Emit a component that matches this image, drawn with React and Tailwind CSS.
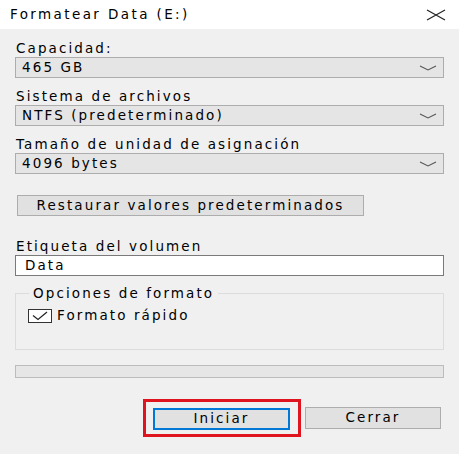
import { useState } from 'react';

const font = { fontFamily: '"DejaVu Sans", Verdana, sans-serif' };

function Chevron() {
    return (
        <svg width="18" height="6" viewBox="0 0 18 6" fill="none" className="text-[#555]">
            <path d="M1 1 L9 5 L17 1" stroke="currentColor" strokeWidth="1.1" />
        </svg>
    );
}

function Combo({ value }) {
    return (
        <div className="h-[21px] flex items-center justify-between bg-[#e5e5e5] border border-[#adadad] pl-[6px] pr-[6px]">
            <span className="text-[13.5px] leading-none tracking-[2.1px] text-black">{value}</span>
            <Chevron />
        </div>
    );
}

function Label({ children, className = '' }) {
    return (
        <div className={`text-[13.5px] leading-[16px] tracking-[2.1px] text-black ${className}`}>{children}</div>
    );
}

export default function App() {
    const [quick, setQuick] = useState(true);

    return (
        <div style={font} className="w-[459px] h-[454px] bg-[#f0f0f0] flex flex-col overflow-hidden">
            {/* title bar */}
            <div className="h-[29px] bg-white flex items-center justify-between pl-[10px] pr-[13px]">
                <span className="text-[13.5px] tracking-[2.4px] text-black">Formatear Data (E:)</span>
                <svg width="20" height="12" viewBox="0 0 20 12" className="text-[#222]">
                    <path d="M1 1 L19 11 M19 1 L1 11" stroke="currentColor" strokeWidth="1.2" fill="none" />
                </svg>
            </div>

            <div className="flex flex-col px-[15px] pt-[11px]">
                <Label className="pl-px">Capacidad:</Label>
                <div className="mt-px">
                    <Combo value="465 GB" />
                </div>

                <Label className="mt-[10px] pl-px">Sistema de archivos</Label>
                <div className="mt-px">
                    <Combo value="NTFS (predeterminado)" />
                </div>

                <Label className="mt-[10px] pl-px">Tamaño de unidad de asignación</Label>
                <div className="mt-px">
                    <Combo value="4096 bytes" />
                </div>

                <div className="mt-[19px] pl-[2px]">
                    <button className="h-[21px] w-[347px] bg-[#e1e1e1] border border-[#adadad] text-[13.5px] leading-none tracking-[2.1px] text-black">
                        Restaurar valores predeterminados
                    </button>
                </div>

                <Label className="mt-[21px] pl-px">Etiqueta del volumen</Label>
                <div className="mt-px h-[21px] bg-white border border-[#7a7a7a] flex items-center pl-[9px]">
                    <span className="text-[13.5px] leading-none tracking-[2.1px] text-black">Data</span>
                </div>

                {/* Opciones de formato */}
                <div className="relative mt-[17px] h-[57px] border border-[#dcdcdc]">
                    <span className="absolute -top-[9px] left-[13px] px-[4px] bg-[#f0f0f0] text-[13.5px] leading-[16px] tracking-[2.1px] text-black">
                        Opciones de formato
                    </span>
                    <label className="flex items-center gap-[5px] mt-[15px] ml-[12px]">
                        <button
                            onClick={() => setQuick(!quick)}
                            className="w-[24px] h-[14px] bg-white border border-[#333] flex items-center justify-center"
                        >
                            {quick && (
                                <svg width="18" height="10" viewBox="0 0 18 10" fill="none" className="text-[#222]">
                                    <path d="M2 4.5 L7 8.5 L16 1" stroke="currentColor" strokeWidth="1.2" />
                                </svg>
                            )}
                        </button>
                        <span className="text-[13.5px] leading-none tracking-[2.1px] text-black">Formato rápido</span>
                    </label>
                </div>

                {/* progress bar */}
                <div className="mt-[15px] h-[13px] bg-[#e6e6e6] border border-[#bcbcbc]" />

                {/* buttons */}
                <div className="mt-[21px] flex items-center justify-end">
                    <div className="border-[3px] border-[#e0141e] p-[4px] pl-[7px] pr-[8px]">
                        <button className="w-[137px] h-[22px] bg-[#e1e1e1] border-2 border-[#0078d7] text-[13.5px] leading-none tracking-[2.1px] text-black">
                            Iniciar
                        </button>
                    </div>
                    <button className="ml-[4px] mr-[3px] w-[136px] h-[22px] bg-[#e1e1e1] border border-[#adadad] text-[13.5px] leading-none tracking-[2.1px] text-black">
                        Cerrar
                    </button>
                </div>
            </div>
        </div>
    );
}
